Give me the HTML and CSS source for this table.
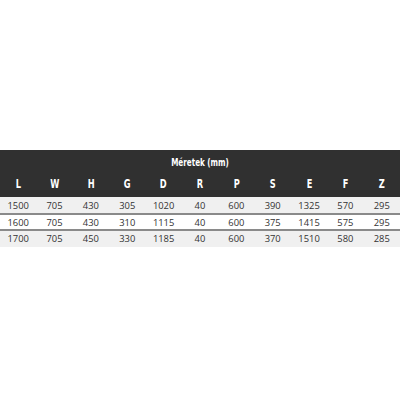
FILE: index.html
```html
<!DOCTYPE html>
<html>
<head>
<meta charset="utf-8">
<link rel="stylesheet" href="styles.css">
</head>
<body>
<div class="page">
<table class="dims">
  <thead>
    <tr class="title-row"><th colspan="11"><span class="cond">Méretek (mm)</span></th></tr>
    <tr class="letters">
      <th><span class="cond">L</span></th><th><span class="cond">W</span></th><th><span class="cond">H</span></th><th><span class="cond">G</span></th><th><span class="cond">D</span></th><th><span class="cond">R</span></th><th><span class="cond">P</span></th><th><span class="cond">S</span></th><th><span class="cond">E</span></th><th><span class="cond">F</span></th><th><span class="cond">Z</span></th>
    </tr>
  </thead>
  <tbody>
    <tr class="shade r1"><td>1500</td><td>705</td><td>430</td><td>305</td><td>1020</td><td>40</td><td>600</td><td>390</td><td>1325</td><td>570</td><td>295</td></tr>
    <tr class="r2"><td>1600</td><td>705</td><td>430</td><td>310</td><td>1115</td><td>40</td><td>600</td><td>375</td><td>1415</td><td>575</td><td>295</td></tr>
    <tr class="shade r3"><td>1700</td><td>705</td><td>450</td><td>330</td><td>1185</td><td>40</td><td>600</td><td>370</td><td>1510</td><td>580</td><td>285</td></tr>
  </tbody>
</table>
</div>
</body>
</html>
```
FILE: styles.css
```css
html, body {
  margin: 0;
  padding: 0;
  background: #ffffff;
}
.page {
  width: 400px;
  height: 400px;
  padding-top: 150px;
  box-sizing: border-box;
}
.dims {
  width: 400px;
  border-collapse: collapse;
  table-layout: fixed;
  font-family: "Open Sans", "Liberation Sans", sans-serif;
}
.dims th {
  background: #303030;
  color: #ffffff;
  font-family: "DejaVu Sans Condensed", "DejaVu Sans", sans-serif;
  font-weight: bold;
  padding: 0;
  text-align: center;
  line-height: 1;
}
.cond {
  display: inline-block;
  transform: scaleX(0.8);
}
.title-row th {
  height: 25px;
  font-size: 10px;
  vertical-align: middle;
  padding-top: 1px;
  box-sizing: border-box;
}
.letters th {
  height: 22px;
  font-size: 11.5px;
  vertical-align: middle;
  padding-bottom: 2px;
  box-sizing: border-box;
}
.dims td {
  padding: 0;
  font-size: 9.4px;
  line-height: 1;
  color: #333333;
  text-align: center;
  vertical-align: middle;
  border-bottom: 2px solid #8a8a8a;
}
.r1 td { height: 17px; padding-top: 1px; box-sizing: border-box; }
.r2 td { height: 16px; padding-top: 1px; box-sizing: border-box; }
.r3 td { height: 17px; border-bottom: none; box-sizing: border-box; }
.dims tr.shade td {
  background: #f0f0f0;
}
```
